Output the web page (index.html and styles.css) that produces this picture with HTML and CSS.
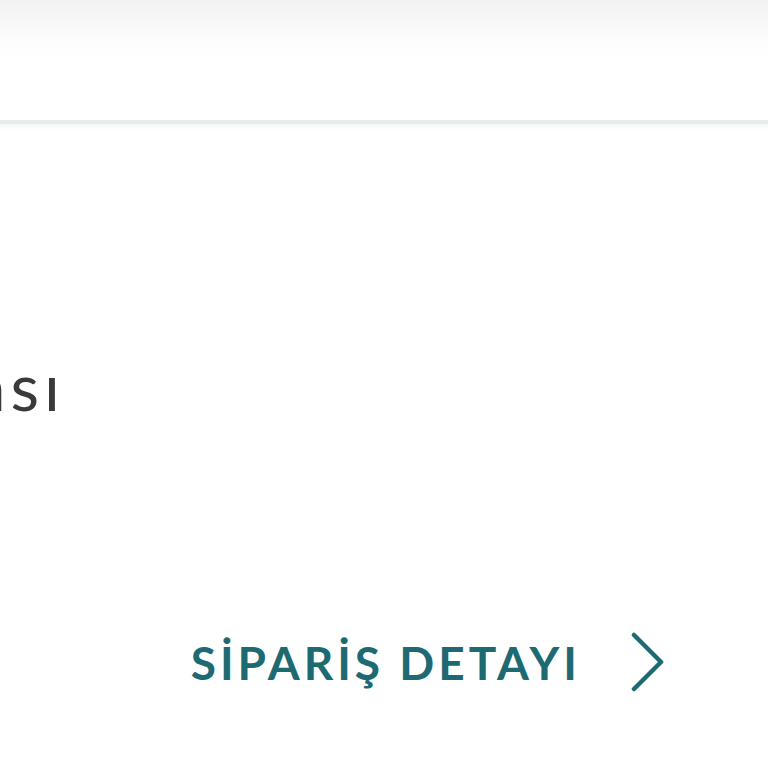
FILE: index.html
```html
<!DOCTYPE html>
<html lang="tr">
<head>
    <meta charset="UTF-8">
    <meta name="viewport" content="width=device-width, initial-scale=1.0">
    <title>Sipariş</title>
    <link rel="stylesheet" href="styles.css">
</head>
<body>
    <div class="topbar"></div>

    <div class="content">
        <div class="title-clip">
            <h1 class="title">Alışveriş Finansı</h1>
        </div>

        <a class="detail-link" href="#">
            <span>SİPARİŞ DETAYI</span>
            <svg class="chevron" width="34" height="60" viewBox="0 0 34 60">
                <polyline points="3,3 30,30 3,57" fill="none" stroke="#1d6a72" stroke-width="4.5" stroke-linecap="round" stroke-linejoin="round"/>
            </svg>
        </a>
    </div>
</body>
</html>
```

FILE: styles.css
```css
body {
    margin: 0;
    background: #fff;
    font-family: Lato, "Open Sans", sans-serif;
}
.topbar {
    height: 120px;
    background: linear-gradient(#f2f2f2, #fcfcfc 40px, #fff 60px);
    border-bottom: 4px solid #e8ecea;
    box-shadow: 0 3px 3px rgba(220, 232, 228, 0.35);
}
.content {
    padding-top: 229px;
}
.title-clip {
    width: 65px;
    display: flex;
    justify-content: flex-end;
    overflow: hidden;
}
.title {
    margin: 0;
    white-space: nowrap;
    font-size: 66px;
    font-weight: 400;
    line-height: 1;
    letter-spacing: 5px;
    color: #3a3a3a;
}
.detail-link {
    display: flex;
    justify-content: flex-end;
    align-items: center;
    gap: 50px;
    margin-top: 213px;
    padding-right: 103px;
    text-decoration: none;
    color: #1d6a72;
    font-size: 46px;
    font-weight: 700;
    letter-spacing: 4px;
}
.chevron {
    flex: none;
}
```
